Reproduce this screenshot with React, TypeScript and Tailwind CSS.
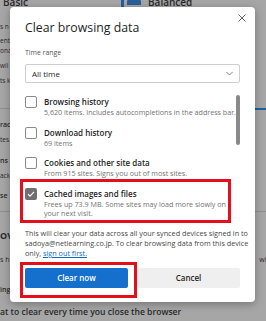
import React from "react";

const font = { fontFamily: '"Open Sans", "Noto Sans", Arial, sans-serif' };

function Check({ checked }: { checked?: boolean }) {
  return checked ? (
    <div className="w-[12px] h-[12px] rounded-[2px] bg-[#6f6f6f] flex items-center justify-center shrink-0">
      <svg width="8" height="8" viewBox="0 0 8 8">
        <path d="M1 4.2 L3 6.2 L7 1.8" stroke="#fff" strokeWidth="1.1" fill="none" />
      </svg>
    </div>
  ) : (
    <div className="w-[12px] h-[12px] rounded-[2px] border border-[#8a8a8a] bg-white shrink-0" />
  );
}

function Item({
  checked,
  title,
  sub,
}: {
  checked?: boolean;
  title: string;
  sub: React.ReactNode;
}) {
  return (
    <div className="flex gap-[7px] h-[30.5px] shrink-0">
      <Check checked={checked} />
      <div className="flex flex-col">
        <div className="text-[8px] leading-[11px] font-semibold text-[#262626]">{title}</div>
        <div className="text-[7.15px] leading-[9.5px] text-[#737373] mt-[1px] whitespace-nowrap">{sub}</div>
      </div>
    </div>
  );
}

export default function App() {
  return (
    <div className="relative w-[266px] h-[321px] overflow-hidden bg-[#a6a6a6]" style={font}>
      {/* background page */}
      <div className="flex flex-col text-[#2a2a2a]">
        <div className="flex items-center h-[8px] -mt-[2px]">
          <div className="pl-[3px] text-[10px] font-semibold w-[121px] leading-[10px]">Basic</div>
          <div className="w-[3px] h-[12px] bg-[#1f5fa8]" />
          <div className="ml-[3px] w-[14px] h-[6px] bg-[#2b5f9a] rounded-t-[3px]" />
          <div className="ml-[7px] text-[10px] font-semibold leading-[10px]">Balanced</div>
        </div>
        <div className="flex flex-col text-[6.5px] leading-[10px]">
          <div className="mt-[16px]">s n</div>
          <div className="mt-[4px]">ent</div>
          <div>ona</div>
          <div className="mt-[5px]">wil</div>
          <div className="mt-[5px]">ts k</div>
        </div>
        <div className="flex mt-[22px] h-[1px]">
          <div className="w-[255px] bg-[#8e8e8e]" />
          <div className="flex-1 bg-[#1d5fa6] h-[2px]" />
        </div>
        <div className="flex flex-col text-[7px] leading-[10px]">
          <div className="mt-[11px] font-semibold">rac</div>
          <div className="mt-[5px] text-[6.5px]">tes</div>
          <div className="mt-[11px] font-semibold">ns</div>
          <div className="mt-[5px] text-[6.5px]">ack</div>
          <div className="mt-[10px] font-semibold">se</div>
        </div>
        <div className="mt-[10px] h-[1px] bg-[#8e8e8e]" />
        <div className="flex flex-col text-[7px] leading-[10px]">
          <div className="mt-[19px] font-bold text-[9px]">OV</div>
          <div className="mt-[14px] flex justify-between">
            <span>s h</span>
            <span className="-mr-[4px]">will</span>
          </div>
          <div className="mt-[20px] font-semibold">ing</div>
          <div className="mt-[12px] font-semibold text-[8.6px] leading-[10px] whitespace-nowrap">
            at to clear every time you close the browser
          </div>
        </div>
      </div>

      {/* dialog */}
      <div className="absolute left-[10px] top-[7px] w-[245px] h-[295px] bg-white rounded-[4px] shadow-[0_2px_8px_rgba(0,0,0,0.3)] flex flex-col px-[15px]">
        <div className="flex justify-between items-start pt-[12px] h-[30px]">
          <div className="text-[12.3px] leading-[18px] text-[#1e1e1e]">Clear browsing data</div>
          <svg width="8" height="8" viewBox="0 0 8 8" className="-mr-[6px] -mt-[5px]">
            <path d="M0.5 0.5 L7.5 7.5 M7.5 0.5 L0.5 7.5" stroke="#555" strokeWidth="0.9" />
          </svg>
        </div>
        <div className="mt-[11px] text-[6.9px] leading-[10px] text-[#555]">Time range</div>
        <div className="mt-[6px] h-[19px] border border-[#cfcfcf] rounded-[2px] flex items-center justify-between px-[6px]">
          <span className="text-[8px] text-[#262626]">All time</span>
          <svg width="7" height="5" viewBox="0 0 7 5">
            <path d="M0.5 1 L3.5 4 L6.5 1" stroke="#666" strokeWidth="0.8" fill="none" />
          </svg>
        </div>
        <div className="relative mt-[13px] h-[132px] flex flex-col pr-[8px]">
          <Item title="Browsing history" sub="5,620 items. Includes autocompletions in the address bar." />
          <Item title="Download history" sub="69 items" />
          <Item title="Cookies and other site data" sub="From 915 sites. Signs you out of most sites." />
          <Item
            checked
            title="Cached images and files"
            sub={
              <>
                Frees up 73.9 MB. Some sites may load more slowly on
                <br />
                your next visit.
              </>
            }
          />
          <div className="absolute right-[0px] top-[-1px] w-[4px] h-[50px] rounded-full bg-[#8a8a8a]" />
          <div className="absolute left-[-5px] top-[83px] w-[211px] h-[44px] border-[3px] border-[#e3101c]" />
        </div>
        <div className="text-[7.25px] leading-[10px] text-[#474747] whitespace-nowrap">
          This will clear your data across all your synced devices signed in to
          <br />
          sadoya@netlearning.co.jp. To clear browsing data from this device
          <br />
          only, <span className="text-[#0f6cbd] underline">sign out first.</span>
        </div>
        <div className="relative mt-[10px] flex gap-[9px]">
          <div className="flex-1 h-[20px] rounded-[2px] bg-[#1470cc] text-white text-[8px] font-semibold flex items-center justify-center">
            Clear now
          </div>
          <div className="flex-1 h-[20px] rounded-[2px] bg-[#efefef] text-[#262626] text-[8px] font-semibold flex items-center justify-center">
            Cancel
          </div>
          <div className="absolute left-[-5px] top-[-6px] w-[117px] h-[36px] border-[3px] border-[#e3101c]" />
        </div>
      </div>
    </div>
  );
}
